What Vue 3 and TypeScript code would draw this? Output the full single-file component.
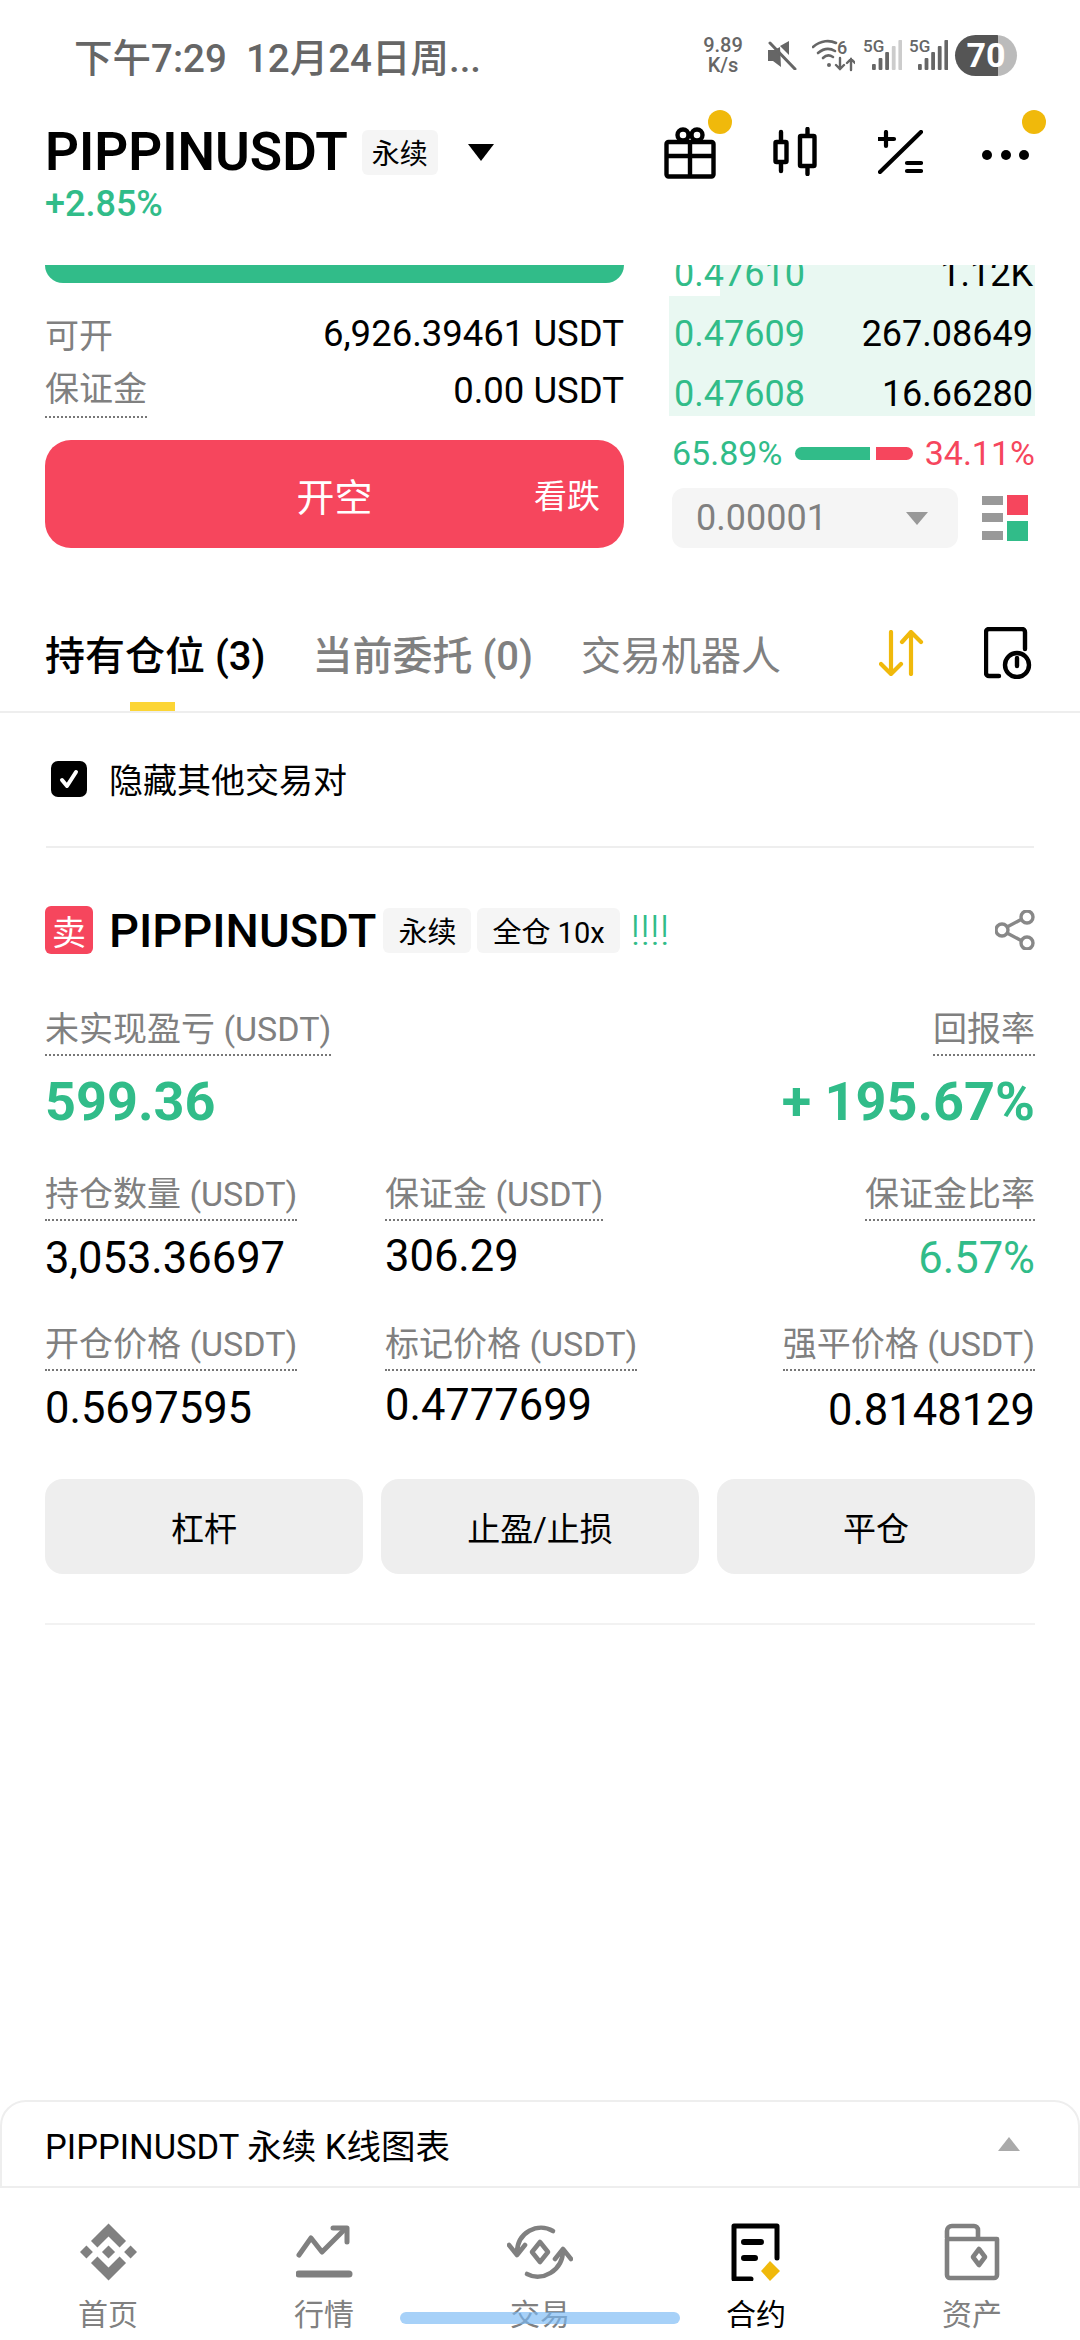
<template>
  <div class="page">
    <div class="status">
      <span class="clock">下午7:29&nbsp;&nbsp;12月24日周...</span>
      <div class="status-right">
        <div class="speed">9.89<br />K/s</div>
        <svg class="mute" width="30" height="30" viewBox="0 0 30 30">
          <path d="M1 10h6l6-3 1 20-8-6H1z" fill="#666" />
          <path d="M22 1v14L13 6z" fill="#666" />
          <path d="M3 3l25 26" stroke="#666" stroke-width="3" stroke-linecap="round" />
        </svg>
        <svg class="wifi" width="43" height="36" viewBox="0 0 43 36" fill="none" stroke="#666" stroke-linecap="round">
          <path d="M1 10C9 3 18 3 24 6" stroke-width="2.6" />
          <path d="M6 16c6-5 12-5 17-2" stroke-width="2.6" />
          <path d="M11 21c3-3 7-3 10-1" stroke-width="2.6" />
          <circle cx="17" cy="28" r="2" fill="#666" stroke="none" />
          <path d="M28 21v11m-4-4l4 4 4-4M39 33V22m-4 4l4-4 4 4" stroke-width="2.4" />
          <text x="25" y="17" class="six">6</text>
        </svg>
        <svg v-for="(lit, i) in [3, 5]" :key="i" class="signal" width="39" height="38" viewBox="0 0 39 38">
          <text x="0" y="16" class="fiveg">5G</text>
          <rect
            v-for="b in 5"
            :key="b"
            :x="9 + (b - 1) * 6.6"
            :y="34 - b * 6"
            width="3.8"
            :height="b * 6"
            rx="1"
            :fill="b <= lit ? '#666' : '#ccc'"
          />
        </svg>
        <div class="battery"><span>70</span></div>
      </div>
    </div>

    <div class="header">
      <div class="title-block">
        <div class="title-line">
          <span class="symbol">PIPPINUSDT</span>
          <span class="tag tag-head">永续</span>
          <span class="down-caret"></span>
        </div>
        <div class="change">+2.85%</div>
      </div>
      <div class="tools">
        <div class="tool tool-gift">
          <svg width="52" height="52" viewBox="0 0 52 52" fill="none" stroke="#000" stroke-width="4.4" stroke-linejoin="round">
            <rect x="2.5" y="15" width="47" height="34.5" rx="2" />
            <path d="M2.5 29h47M26 15v34" />
            <circle cx="19" cy="8" r="5.5" />
            <circle cx="33" cy="8" r="5.5" />
          </svg>
          <i class="dot"></i>
        </div>
        <div class="tool tool-candle">
          <svg width="44" height="49" viewBox="0 0 44 49" fill="none" stroke="#000" stroke-width="4.4" stroke-linecap="round" stroke-linejoin="round">
            <rect x="2.5" y="15" width="11" height="20" rx="1" />
            <path d="M8 5v9M8 36v8" />
            <rect x="27" y="9" width="14.5" height="30" rx="1" />
            <path d="M34.5 2v6M34.5 40v7" />
          </svg>
        </div>
        <div class="tool tool-calc">
          <svg width="45" height="44" viewBox="0 0 45 44" fill="none" stroke="#000" stroke-width="4.2" stroke-linecap="round">
            <path d="M8 2v14M1 9h15" />
            <path d="M43 2L2 42" />
            <path d="M29 33h14M29 41h14" />
          </svg>
        </div>
        <div class="tool tool-more">
          <svg width="47" height="12" viewBox="0 0 47 12" fill="#000">
            <circle cx="5" cy="6" r="5" />
            <circle cx="24" cy="6" r="5" />
            <circle cx="42" cy="6" r="5" />
          </svg>
          <i class="dot dot-more"></i>
        </div>
      </div>
    </div>

    <div class="trade">
      <div class="trade-left">
        <div class="buy-strip"></div>
        <div class="info-row first">
          <span class="muted">可开</span>
          <span>6,926.39461 USDT</span>
        </div>
        <div class="info-row second">
          <span class="muted dotted">保证金</span>
          <span>0.00 USDT</span>
        </div>
        <div class="sell-btn">
          <span class="sell-main">开空</span>
          <span class="sell-side">看跌</span>
        </div>
      </div>
      <div class="trade-right">
        <div class="book">
          <div v-for="row in bookRows" :key="row.price" class="book-row">
            <div class="book-fill" :style="{ width: row.fill + '%' }"></div>
            <span class="green book-price">{{ row.price }}</span>
            <span class="book-qty">{{ row.qty }}</span>
          </div>
        </div>
        <div class="ratio">
          <span class="green">65.89%</span>
          <div class="ratio-bar">
            <i class="ratio-buy"></i>
            <i class="ratio-sell"></i>
          </div>
          <span class="red">34.11%</span>
        </div>
        <div class="depth">
          <div class="depth-select">
            <span>0.00001</span>
            <i class="gray-caret"></i>
          </div>
          <svg width="46" height="46" viewBox="0 0 46 46">
            <rect x="0" y="1" width="21" height="9" fill="#999" />
            <rect x="0" y="18" width="21" height="9" fill="#999" />
            <rect x="0" y="36" width="21" height="9" fill="#999" />
            <rect x="25" y="0" width="21" height="20" fill="#f6465d" />
            <rect x="25" y="26" width="21" height="20" fill="#31bc89" />
          </svg>
        </div>
      </div>
    </div>

    <div class="tabs">
      <div class="tab active">持有仓位 (3)<i class="tab-line"></i></div>
      <div class="tab tab-order">当前委托 (0)</div>
      <div class="tab tab-bot">交易机器人</div>
      <div class="tab-icons">
        <svg width="45" height="46" viewBox="0 0 45 46" fill="none" stroke="#f0b90b" stroke-width="4.2" stroke-linecap="round" stroke-linejoin="round">
          <path d="M12 2v42M2 34l10 10 10-10" />
          <path d="M32 44V2M23 12l9-10 10 10" />
        </svg>
        <svg width="48" height="52" viewBox="0 0 48 52" fill="none" stroke="#000" stroke-width="4.4" stroke-linecap="round" stroke-linejoin="round">
          <path d="M15 49H5a3 3 0 0 1-3-3V5a3 3 0 0 1 3-3h33a3 3 0 0 1 3 3v17" />
          <circle cx="33" cy="38" r="12" />
          <path d="M33 31v8" />
        </svg>
      </div>
    </div>

    <div class="filter">
      <span class="check">
        <svg width="24" height="24" viewBox="0 0 24 24" fill="none" stroke="#fff" stroke-width="4" stroke-linecap="round" stroke-linejoin="round">
          <path d="M5 13l5 6L19 5" />
        </svg>
      </span>
      <span>隐藏其他交易对</span>
    </div>

    <div class="position">
      <div class="pos-head">
        <span class="sell-badge">卖</span>
        <span class="pos-symbol">PIPPINUSDT</span>
        <span class="tag">永续</span>
        <span class="tag">全仓 10x</span>
        <span class="bangs">!!!!</span>
        <svg class="share" width="40" height="40" viewBox="0 0 40 40" fill="none" stroke="#888" stroke-width="3.4">
          <circle cx="32" cy="7" r="6" />
          <circle cx="7" cy="20" r="6" />
          <circle cx="32" cy="33" r="6" />
          <path d="M12 17l15-8M12 23l15 8" />
        </svg>
      </div>

      <div class="pnl-row">
        <div>
          <div class="label"><span class="dotted">未实现盈亏 (USDT)</span></div>
          <div class="pnl green">599.36</div>
        </div>
        <div class="right">
          <div class="label"><span class="dotted">回报率</span></div>
          <div class="pnl green">+ 195.67%</div>
        </div>
      </div>

      <div class="stats">
        <div v-for="s in stats" :key="s.label" class="stat" :class="s.cls">
          <div class="label"><span class="dotted" :class="{ plain: s.plain }">{{ s.label }}</span></div>
          <div class="stat-value" :class="{ green: s.green }" :style="{ marginTop: s.shift + 'px' }">{{ s.value }}</div>
        </div>
      </div>

      <div class="actions">
        <button v-for="a in actions" :key="a" class="action">{{ a }}</button>
      </div>
    </div>

    <div class="spacer"></div>

    <div class="chart-bar">
      <span>PIPPINUSDT 永续 K线图表</span>
      <i class="up-caret"></i>
    </div>

    <nav class="nav">
      <div class="nav-item">
        <svg width="57" height="58" viewBox="0 0 126.61 126.61" fill="#808080">
          <path d="M38.73 53.2l24.59-24.58 24.6 24.6 14.3-14.31L63.32 0 24.42 38.9zM0 63.31L14.3 49l14.31 14.31-14.31 14.3zM38.73 73.41L63.32 98l24.6-24.6 14.31 14.29-38.9 38.91-38.91-38.88zM98 63.31L112.3 49l14.31 14.3-14.31 14.32zM77.83 63.3L63.32 48.78 48.81 63.28l14.51 14.5z" />
        </svg>
        <span>首页</span>
      </div>
      <div class="nav-item">
        <svg width="57" height="58" viewBox="0 0 57 58" fill="none" stroke="#808080" stroke-linecap="round" stroke-linejoin="round">
          <path d="M3 32L15 15l11 14L49 6" stroke-width="5" />
          <path d="M37 5h14v14" stroke-width="5" />
          <path d="M3 51h50" stroke-width="7" />
        </svg>
        <span>行情</span>
      </div>
      <div class="nav-item">
        <svg width="66" height="58" viewBox="0 0 66 58" fill="none" stroke="#808080" stroke-width="4.6" stroke-linecap="round" stroke-linejoin="round">
          <path d="M46 8C31-1 10 9 10 30" />
          <path d="M2 22l8 10 8-10" />
          <path d="M20 51c15 8 36-3 36-24" />
          <path d="M48 36l8-10 8 10" />
          <path d="M33 19l8 10-8 10-8-10z" />
        </svg>
        <span>交易</span>
      </div>
      <div class="nav-item">
        <svg width="50" height="58" viewBox="0 0 50 58" fill="none">
          <path d="M20 56H3V3h43v32" stroke="#000" stroke-width="5" stroke-linejoin="round" stroke-linecap="round" />
          <path d="M13 19h17M13 35h11" stroke="#000" stroke-width="6" stroke-linecap="round" />
          <path d="M39 38l10 10-10 10-9-10z" fill="#f0b90b" />
        </svg>
        <span class="nav-on">合约</span>
      </div>
      <div class="nav-item">
        <svg width="56" height="58" viewBox="0 0 56 58" fill="none" stroke="#808080" stroke-width="4.6" stroke-linejoin="round">
          <path d="M3 15V8a5 5 0 0 1 5-5h22a4 4 0 0 1 4 4v9" />
          <path d="M3 16h50v36a3 3 0 0 1-3 3H6a3 3 0 0 1-3-3z" />
          <path d="M35 26l6 8-6 8-6-8z" />
        </svg>
        <span>资产</span>
      </div>
    </nav>

    <div class="home-bar"></div>
  </div>
</template>

<script setup lang="ts">
interface Stat {
  label: string;
  value: string;
  cls: string;
  shift: number;
  green?: boolean;
  plain?: boolean;
}

const bookRows = [
  { price: "0.47610", qty: "1.12K", fill: 86 },
  { price: "0.47609", qty: "267.08649", fill: 100 },
  { price: "0.47608", qty: "16.66280", fill: 100 },
];

const stats: Stat[] = [
  { label: "持仓数量 (USDT)", value: "3,053.36697", cls: "", shift: 0 },
  { label: "保证金 (USDT)", value: "306.29", cls: "", shift: -2, plain: true },
  { label: "保证金比率", value: "6.57%", cls: "right", shift: 0, green: true },
  { label: "开仓价格 (USDT)", value: "0.5697595", cls: "", shift: 0 },
  { label: "标记价格 (USDT)", value: "0.4777699", cls: "", shift: -3, plain: true },
  { label: "强平价格 (USDT)", value: "0.8148129", cls: "right", shift: 2 },
];

const actions = ["杠杆", "止盈/止损", "平仓"];
</script>

<style>
html,
body {
  margin: 0;
  background: #fff;
}
</style>

<style scoped>
.page {
  position: relative;
  width: 1080px;
  height: 2340px;
  overflow: hidden;
  display: flex;
  flex-direction: column;
  background: #fff;
  color: #000;
  font-family: Roboto, "Noto Sans CJK SC", sans-serif;
}

.status {
  height: 110px;
  flex: none;
  display: flex;
  align-items: center;
  padding: 0 63px 0 74px;
  color: #666;
}
.clock {
  font-size: 38.5px;
  font-weight: 500;
}
.status-right {
  margin-left: auto;
  display: flex;
  align-items: center;
}
.speed {
  width: 44px;
  font-size: 20px;
  line-height: 20px;
  font-weight: 500;
  text-align: center;
  margin-right: 22px;
}
.mute {
  margin-right: 15px;
}
.wifi {
  margin-right: 8px;
}
.signal {
  margin-right: 7px;
}
.six {
  font: 500 18px Roboto, sans-serif;
  fill: #666;
  stroke: none;
}
.fiveg {
  font: 500 17px Roboto, sans-serif;
  fill: #666;
}
.battery {
  width: 62px;
  height: 41px;
  border-radius: 21px;
  background: linear-gradient(90deg, #555 0 70%, #bbb 70% 100%);
  color: #fff;
  font-size: 34px;
  font-weight: 700;
  line-height: 41px;
  text-align: center;
}

.header {
  height: 155px;
  flex: none;
  display: flex;
  justify-content: space-between;
  padding: 0 45px;
  position: relative;
}
.title-line {
  display: flex;
  align-items: center;
  height: 46px;
  margin-top: 19px;
}
.symbol {
  font-size: 53px;
  font-weight: 600;
}
.tag {
  display: inline-flex;
  align-items: center;
  justify-content: center;
  height: 45px;
  padding: 0 15px;
  background: #f5f5f5;
  border-radius: 6px;
  font-size: 29px;
}
.tag-head {
  margin-left: 14px;
  padding: 0 10px;
  font-size: 28px;
}
.down-caret {
  width: 0;
  height: 0;
  margin-left: 30px;
  border-left: 13px solid transparent;
  border-right: 13px solid transparent;
  border-top: 17px solid #000;
}
.change {
  margin-top: 8px;
  font-size: 36px;
  font-weight: 500;
  color: #31bc89;
}
.tools {
  display: flex;
  align-items: flex-start;
}
.tool {
  position: relative;
  flex: none;
}
.tool-gift {
  margin-top: 17px;
}
.tool-candle {
  margin: 17px 0 0 57px;
}
.tool-calc {
  margin: 20px 0 0 61px;
}
.tool-more {
  margin: 36px 6px 0 59px;
}
.dot {
  position: absolute;
  width: 24px;
  height: 24px;
  border-radius: 50%;
  background: #f0b90b;
  left: 44px;
  top: -17px;
}
.dot-more {
  left: 40px;
  top: -36px;
}

.trade {
  height: 285px;
  flex: none;
  display: flex;
  justify-content: space-between;
  padding: 0 45px;
  overflow: hidden;
}
.trade-left {
  width: 579px;
}
.buy-strip {
  height: 18px;
  background: #31bc89;
  border-radius: 0 0 24px 24px;
}
.info-row {
  display: flex;
  justify-content: space-between;
  align-items: center;
  font-size: 36.5px;
  height: 46px;
}
.info-row.first {
  margin-top: 27px;
}
.info-row.second {
  margin-top: 11px;
}
.info-row .muted {
  font-size: 34px;
}
.muted {
  color: #808080;
}
.dotted {
  border-bottom: 2px dotted #777;
  padding-bottom: 5px;
}
.sell-btn {
  position: relative;
  height: 108px;
  margin-top: 27px;
  border-radius: 26px;
  background: #f6465d;
  color: #fff;
  display: flex;
  align-items: center;
  justify-content: center;
  font-size: 38px;
}
.sell-side {
  position: absolute;
  right: 24px;
  font-size: 33px;
}
.trade-right {
  width: 363px;
  flex: none;
}
.book {
  margin: -21px 0 0 -3px;
  font-size: 36px;
}
.book-row {
  position: relative;
  height: 60px;
  display: flex;
  justify-content: space-between;
  align-items: center;
  padding: 0 2px 0 5px;
}
.book-fill {
  position: absolute;
  top: -8px;
  right: 0;
  bottom: 8px;
  background: #e9f8f2;
}
.book-price,
.book-qty {
  position: relative;
}
.green {
  color: #31bc89;
}
.red {
  color: #f6465d;
}
.ratio {
  display: flex;
  align-items: center;
  justify-content: space-between;
  font-size: 34px;
  height: 40px;
  margin-top: 9px;
}
.ratio-bar {
  display: flex;
  gap: 6px;
  width: 118px;
}
.ratio-bar i {
  height: 13px;
}
.ratio-buy {
  width: 75px;
  background: #31bc89;
  border-radius: 7px 0 0 7px;
}
.ratio-sell {
  width: 37px;
  background: #f6465d;
  border-radius: 0 7px 7px 0;
}
.depth {
  display: flex;
  justify-content: space-between;
  align-items: center;
  margin-top: 15px;
}
.depth-select {
  width: 286px;
  height: 60px;
  box-sizing: border-box;
  padding: 0 30px 0 24px;
  border-radius: 12px;
  background: #f5f5f5;
  color: #808080;
  font-size: 36px;
  display: flex;
  align-items: center;
  justify-content: space-between;
}
.gray-caret {
  border-left: 11px solid transparent;
  border-right: 11px solid transparent;
  border-top: 13px solid #999;
}
.depth svg {
  margin-right: 7px;
}

.tabs {
  height: 163px;
  flex: none;
  box-sizing: border-box;
  border-bottom: 2px solid #eee;
  padding: 45px 48px 0 45px;
  display: flex;
  align-items: center;
  font-size: 40px;
  font-weight: 500;
  color: #808080;
}
.tab {
  position: relative;
}
.tab.active {
  color: #000;
}
.tab-order {
  margin-left: 47px;
}
.tab-bot {
  margin-left: 48px;
  font-weight: 400;
}
.tab-line {
  position: absolute;
  left: 85px;
  bottom: -29px;
  width: 45px;
  height: 9px;
  background: #fcd535;
}
.tab-icons {
  margin-left: auto;
  display: flex;
  align-items: center;
  gap: 60px;
}

.filter {
  height: 135px;
  margin: 0 46px;
  flex: none;
  box-sizing: border-box;
  border-bottom: 2px solid #eee;
  display: flex;
  align-items: center;
  gap: 22px;
  padding: 0 0 2px 5px;
  font-size: 34px;
}
.check {
  width: 36px;
  height: 36px;
  border-radius: 7px;
  background: #000;
  display: flex;
  align-items: center;
  justify-content: center;
}

.position {
  flex: none;
  margin: 0 45px;
  padding-bottom: 49px;
  border-bottom: 2px solid #f2f2f2;
}
.pos-head {
  display: flex;
  align-items: center;
  height: 48px;
  margin-top: 58px;
}
.sell-badge {
  width: 48px;
  height: 48px;
  border-radius: 6px;
  background: #f6465d;
  color: #fff;
  font-size: 34px;
  display: flex;
  align-items: center;
  justify-content: center;
}
.pos-symbol {
  margin-left: 16px;
  font-size: 47px;
  font-weight: 500;
  margin-right: 7px;
}
.pos-head .tag {
  margin-right: 6px;
}
.bangs {
  margin-left: 5px;
  color: #31bc89;
  font-size: 43px;
  font-weight: 300;
}
.share {
  margin-left: auto;
}
.label {
  font-size: 34px;
  color: #808080;
  height: 44px;
  line-height: 44px;
}
.pnl-row {
  margin-top: 53px;
  display: flex;
  justify-content: space-between;
}
.right {
  text-align: right;
}
.pnl {
  font-size: 54px;
  font-weight: 700;
  margin-top: 20px;
  line-height: 62px;
}
.stats {
  display: grid;
  grid-template-columns: 340px 340px 1fr;
  row-gap: 38px;
  margin-top: 39px;
}
.stat-value {
  font-size: 43.5px;
  line-height: 50px;
  padding-top: 18px;
}
.actions {
  display: grid;
  grid-template-columns: repeat(3, 1fr);
  gap: 18px;
  margin-top: 43px;
}
.action {
  height: 95px;
  border: none;
  border-radius: 18px;
  background: #eee;
  color: #000;
  font: 400 33px Roboto, "Noto Sans CJK SC", sans-serif;
}

.spacer {
  flex: 1;
}

.chart-bar {
  height: 88px;
  flex: none;
  box-sizing: border-box;
  border: 2px solid #eee;
  border-radius: 26px 26px 0 0;
  display: flex;
  align-items: center;
  justify-content: space-between;
  padding: 0 58px 0 43px;
  font-size: 34.5px;
}
.up-caret {
  border-left: 11px solid transparent;
  border-right: 11px solid transparent;
  border-bottom: 14px solid #aaa;
}
.nav {
  height: 152px;
  flex: none;
  display: grid;
  grid-template-columns: repeat(5, 216px);
}
.nav-item {
  display: flex;
  flex-direction: column;
  align-items: center;
  padding-top: 35px;
  font-size: 30px;
  color: #808080;
}
.nav-item svg {
  height: 58px;
}
.nav-item span {
  margin-top: 16px;
  line-height: 36px;
}
.nav-on {
  color: #000;
}
.home-bar {
  position: absolute;
  left: 400px;
  top: 2312px;
  width: 280px;
  height: 12px;
  border-radius: 6px;
  background: rgba(120, 185, 245, 0.65);
}
</style>
